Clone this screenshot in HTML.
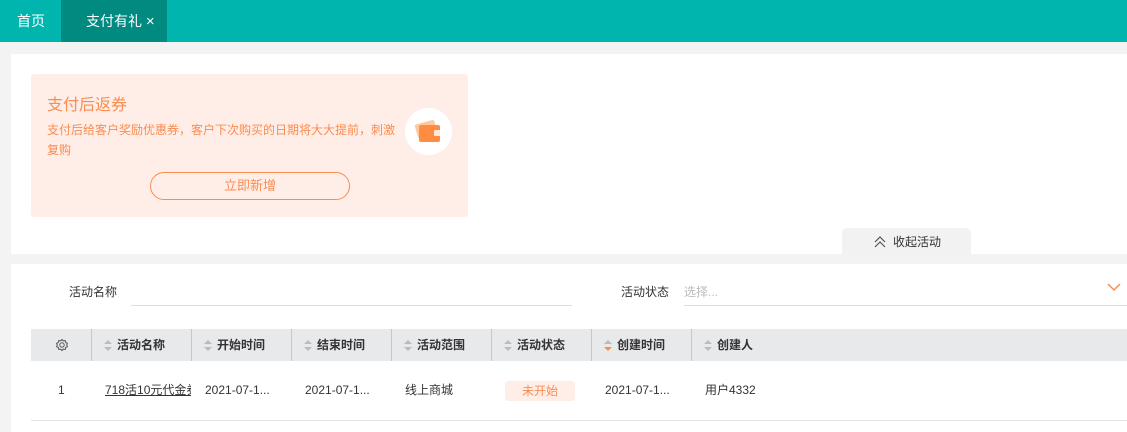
<!DOCTYPE html>
<html><head><meta charset="utf-8"><style>
*{margin:0;padding:0;box-sizing:border-box}
body{width:1127px;height:432px;overflow:hidden;background:#f3f3f3;font-family:"Liberation Sans","Noto Sans CJK SC",sans-serif;font-size:13px;color:#333;position:relative}
.abs{position:absolute}
.top{left:0;top:0;width:1127px;height:42px;background:#00b5ad}
.tab{color:#fff;font-size:14px;line-height:42px}
.panel{left:11px;top:54px;width:1116px;height:200px;background:#fff}
.card{left:31px;top:74px;width:437px;height:143px;background:#ffeee8;border-radius:3px}
.th{top:329px;height:32px;line-height:32px;font-weight:bold;font-size:12px;color:#333}
.sort{display:inline-block;width:8px;margin-right:5px;vertical-align:middle;line-height:0}
.td{top:361px;height:59px;line-height:59px;font-size:12px;color:#333}
.sep{position:absolute;top:329px;width:1px;height:32px;background:#c8c8c8}
</style></head><body>
<div class="abs top"></div>
<div class="abs tab" style="left:17px">首页</div>
<div class="abs" style="left:61px;top:0;width:106px;height:42px;background:#008a80"></div>
<div class="abs tab" style="left:86px">支付有礼 <span style="font-size:15px">×</span></div>

<div class="abs panel"></div>
<div class="abs card"></div>
<div class="abs" style="left:47px;top:91px;font-size:16px;color:#fa8c4f">支付后返券</div>
<div class="abs" style="left:47px;top:120px;width:350px;font-size:12px;line-height:20px;color:#fa8c4f">支付后给客户奖励优惠券，客户下次购买的日期将大大提前，刺激复购</div>
<div class="abs" style="left:405px;top:108px;width:47px;height:47px;border-radius:50%;background:#fff"></div>
<svg class="abs" style="left:414px;top:118px" width="30" height="28" viewBox="0 0 30 28"><rect x="2" y="4" width="20" height="14" rx="2" fill="#ffc9a0" transform="rotate(-15 12 11)"/><rect x="5" y="7" width="21" height="17" rx="2" fill="#ff8c40"/><rect x="20" y="12" width="7" height="6" rx="1" fill="#fff" opacity=".8"/></svg>
<div class="abs" style="left:150px;top:172px;width:200px;height:28px;border:1px solid #fa8c4f;border-radius:14px;text-align:center;line-height:26px;color:#fa8c4f;font-size:13px">立即新增</div>

<div class="abs" style="left:842px;top:228px;width:129px;height:26px;background:#f2f2f2;border-radius:5px 5px 0 0"></div>
<svg class="abs" style="left:874px;top:236px" width="12" height="12"><path d="M1 6l5-5 5 5M1 11l5-5 5 5" fill="none" stroke="#555" stroke-width="1.2"/></svg>
<div class="abs" style="left:893px;top:233px;font-size:12px;color:#333">收起活动</div>

<div class="abs" style="left:11px;top:264px;width:1116px;height:168px;background:#fff"></div>
<div class="abs" style="left:69px;top:283px;font-size:12px">活动名称</div>
<div class="abs" style="left:131px;top:305px;width:441px;height:1px;background:#ddd"></div>
<div class="abs" style="left:621px;top:283px;font-size:12px">活动状态</div>
<div class="abs" style="left:684px;top:283px;font-size:12px;color:#bbb">选择...</div>
<svg class="abs" style="left:1107px;top:283px" width="14" height="9"><path d="M1 1l6 6 6-6" fill="none" stroke="#fa8c4f" stroke-width="1.5"/></svg>
<div class="abs" style="left:684px;top:305px;width:443px;height:1px;background:#ddd"></div>

<div class="abs" style="left:31px;top:329px;width:1096px;height:32px;background:#e8e9eb"></div>
<svg class="abs" style="left:55px;top:338px" width="14" height="14" viewBox="0 0 14 14"><circle cx="7" cy="7" r="2.2" fill="none" stroke="#555"/><path d="M7 1.5l1.3 1.4 1.9-.3.5 1.9 1.7.9-.7 1.6.7 1.6-1.7.9-.5 1.9-1.9-.3L7 12.5l-1.3-1.4-1.9.3-.5-1.9-1.7-.9.7-1.6-.7-1.6 1.7-.9.5-1.9 1.9.3z" fill="none" stroke="#555" stroke-width="1"/></svg>
<div class="sep" style="left:91px"></div><div class="sep" style="left:191px"></div><div class="sep" style="left:291px"></div><div class="sep" style="left:391px"></div><div class="sep" style="left:491px"></div><div class="sep" style="left:591px"></div><div class="sep" style="left:691px"></div>
<svg width="0" height="0" style="position:absolute"><defs><g id="s"><path d="M0 5l4-4 4 4z" fill="#bbb"/><path d="M0 8l4 4 4-4z" fill="#bbb"/></g></defs></svg>
<div class="abs th" style="left:104px"><svg class="sort" width="8" height="13"><use href="#s"/></svg>活动名称</div>
<div class="abs th" style="left:204px"><svg class="sort" width="8" height="13"><use href="#s"/></svg>开始时间</div>
<div class="abs th" style="left:304px"><svg class="sort" width="8" height="13"><use href="#s"/></svg>结束时间</div>
<div class="abs th" style="left:404px"><svg class="sort" width="8" height="13"><use href="#s"/></svg>活动范围</div>
<div class="abs th" style="left:504px"><svg class="sort" width="8" height="13"><use href="#s"/></svg>活动状态</div>
<div class="abs th" style="left:604px"><svg class="sort" width="8" height="13"><path d="M0 5l4-4 4 4z" fill="#bbb"/><path d="M0 8l4 4 4-4z" fill="#fa8c4f"/></svg>创建时间</div>
<div class="abs th" style="left:704px"><svg class="sort" width="8" height="13"><use href="#s"/></svg>创建人</div>

<div class="abs td" style="left:58px">1</div>
<div class="abs td" style="left:105px;width:86px;overflow:hidden;white-space:nowrap"><span style="text-decoration:underline">718活10元代金券</span></div>
<div class="abs td" style="left:205px">2021-07-1...</div>
<div class="abs td" style="left:305px">2021-07-1...</div>
<div class="abs td" style="left:405px">线上商城</div>
<div class="abs" style="left:505px;top:381px;width:70px;height:20px;background:#ffeee8;border-radius:3px;color:#fa8c4f;text-align:center;line-height:20px;font-size:12px">未开始</div>
<div class="abs td" style="left:605px">2021-07-1...</div>
<div class="abs td" style="left:705px">用户4332</div>
<div class="abs" style="left:31px;top:420px;width:1096px;height:1px;background:#e4e4e4"></div>
</body></html>
